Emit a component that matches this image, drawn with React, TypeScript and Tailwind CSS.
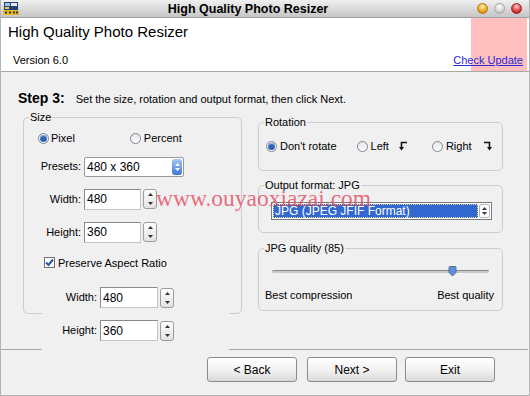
import React from 'react';

function Tri({ up, color = '#333' }: { up?: boolean; color?: string }) {
  return (
    <svg width="5" height="3" viewBox="0 0 5 3">
      <path d={up ? 'M0 3 L2.5 0 L5 3Z' : 'M0 0 L2.5 3 L5 0Z'} fill={color} />
    </svg>
  );
}

function Spin() {
  return (
    <div className="ml-[2px] flex h-[20px] w-[14px] flex-col items-center justify-between rounded-[3px] border border-[#9c9c9c] bg-linear-to-b from-white to-[#e2e2e2] py-[3px]">
      <Tri up />
      <Tri />
    </div>
  );
}

function Radio({ checked }: { checked?: boolean }) {
  return (
    <span className="flex h-[11px] w-[11px] shrink-0 items-center justify-center rounded-full border border-[#7d8794] bg-linear-to-b from-[#e4e4e4] to-white">
      {checked && <span className="h-[7px] w-[7px] rounded-full bg-[#2f62b4] shadow-[inset_0_1px_1px_#9cc0f0]" />}
    </span>
  );
}

function NumField({ label, value }: { label: string; value: string }) {
  return (
    <div className="flex items-center">
      <span className="w-[57px] text-right">{label}</span>
      <div className="ml-[3px] flex h-[21px] w-[57px] items-center border border-[#8a8a8a] border-b-[#c4c4c4] border-r-[#c4c4c4] bg-white pl-[2px] text-[12px]">
        {value}
      </div>
      <Spin />
    </div>
  );
}

function Group({ title, className, children }: { title: string; className: string; children: React.ReactNode }) {
  return (
    <fieldset className={`rounded-[5px] border border-[#cdcdcd] ${className}`}>
      <legend className="ml-[5px] px-[1px] leading-[13px]">{title}</legend>
      {children}
    </fieldset>
  );
}

function TurnArrow({ right }: { right?: boolean }) {
  return (
    <svg width="8" height="10" viewBox="0 0 8 10" className={right ? 'ml-[12px]' : 'ml-[10px]'}>
      {right ? (
        <>
          <path d="M0 1.5 H5.5 V6" stroke="#111" strokeWidth="1.6" fill="none" />
          <path d="M3 6 H8 L5.5 9.5Z" fill="#111" />
        </>
      ) : (
        <>
          <path d="M8 1.5 H2.5 V6" stroke="#111" strokeWidth="1.6" fill="none" />
          <path d="M0 6 H5 L2.5 9.5Z" fill="#111" />
        </>
      )}
    </svg>
  );
}

function AppIcon() {
  return (
    <svg width="16" height="15" viewBox="0 0 16 15">
      <rect x="1" y="1" width="14" height="8" fill="#24407a" />
      <rect x="2" y="2" width="5" height="3" fill="#9fc4ee" />
      <rect x="8" y="2" width="6" height="3" fill="#e8e8e8" />
      <rect x="2" y="6" width="4" height="2" fill="#f4d040" />
      <rect x="0" y="9" width="16" height="5" fill="#e8b828" />
      <rect x="2" y="10.5" width="2" height="2" fill="#333" />
      <rect x="6" y="10.5" width="2" height="2" fill="#333" />
      <rect x="10" y="10.5" width="2" height="2" fill="#333" />
      <rect x="13" y="10.5" width="2" height="2" fill="#333" />
    </svg>
  );
}

function WinButton({ label }: { label: string }) {
  return (
    <button className="h-[25px] w-[90px] rounded-[3px] border border-[#8c8c8c] bg-linear-to-b from-white via-[#f3f3f3] to-[#dadada] text-[12px] text-black">
      {label}
    </button>
  );
}

export default function App() {
  return (
    <div className="relative h-[396px] w-[530px] overflow-hidden border-x border-b border-[#b4b4b4] bg-[#f0f0f0] font-['Liberation_Sans',Arial,sans-serif] text-[11px] text-black">
      {/* title bar */}
      <div className="flex h-[18px] items-center border-b border-[#9e9e9e] bg-linear-to-b from-[#f0f0f0] to-[#c6c6c6]">
        <div className="pl-[2px]">
          <AppIcon />
        </div>
        <div className="flex-1 text-center text-[12.5px] font-bold leading-[18px]">High Quality Photo Resizer</div>
        <div className="flex items-center gap-[6px] pr-[7px]">
          <span className="h-[11px] w-[11px] rounded-full border border-[#b07818] bg-[radial-gradient(circle_at_50%_30%,#fff1b8,#f0a820_55%,#c07000)]" />
          <span className="h-[11px] w-[11px] rounded-full border border-[#a8a8a8] bg-[radial-gradient(circle_at_50%_30%,#ffffff,#d8d8d8_55%,#a8a8a8)]" />
          <span className="h-[11px] w-[11px] rounded-full border border-[#a02020] bg-[radial-gradient(circle_at_50%_30%,#ffd0d0,#e04040_55%,#a01010)]" />
        </div>
      </div>

      {/* header */}
      <div className="relative h-[54px] border-b border-[#a8a8a8] bg-white">
        <div className="absolute bottom-0 right-[2px] top-0 w-[56px] bg-[#ffbfbf]" />
        <div className="relative pl-[7px] pt-[5px] text-[15px] leading-[18px]">High Quality Photo Resizer</div>
        <div className="relative mt-[13px] flex items-center justify-between pl-[12px] pr-[6px] leading-[13px]">
          <span>Version 6.0</span>
          <span className="text-[#2a2ad0] underline">Check Update</span>
        </div>
      </div>

      {/* step line */}
      <div className="flex items-baseline pl-[17px] pt-[18px] leading-[16px]">
        <span className="text-[14px] font-bold">Step 3:</span>
        <span className="ml-[11px]">Set the size, rotation and output format, then click Next.</span>
      </div>

      <div className="mt-[4px] flex items-start pl-[22px]">
        {/* size group */}
        <Group title="Size" className="h-[203px] w-[219px]">
          <div className="mt-[6px] flex items-center pl-[14px]">
            <Radio checked />
            <span className="ml-[2px]">Pixel</span>
            <span className="ml-[55px]">
              <Radio />
            </span>
            <span className="ml-[3px]">Percent</span>
          </div>
          <div className="mt-[10px] flex items-center">
            <span className="w-[57px] text-right">Presets:</span>
            <div className="ml-[3px] flex h-[20px] w-[100px] items-center justify-between rounded-[2px] border border-[#9a9a9a] bg-white pl-[2px] pr-[1px] text-[12px]">
              480 x 360
              <div className="flex h-[16px] w-[10px] flex-col items-center justify-center gap-[2px] rounded-[3px] bg-linear-to-b from-[#a6c8f4] to-[#3a74d4]">
                <Tri up color="#fff" />
                <Tri color="#fff" />
              </div>
            </div>
          </div>
          <div className="mt-[12px]">
            <NumField label="Width:" value="480" />
          </div>
          <div className="mt-[12px]">
            <NumField label="Height:" value="360" />
          </div>
          <div className="mt-[12px] flex items-center pl-[20px]">
            <span className="flex h-[11px] w-[11px] items-center justify-center border border-[#707070] bg-white">
              <svg width="9" height="9" viewBox="0 0 9 9">
                <path d="M1 4.5 L3.5 7 L8 1.5" stroke="#2452a8" strokeWidth="2" fill="none" />
              </svg>
            </span>
            <span className="ml-[3px]">Preserve Aspect Ratio</span>
          </div>
        </Group>

        {/* right column */}
        <div className="ml-[16px] mt-[5px] flex w-[245px] flex-col">
          <Group title="Rotation" className="h-[55px]">
            <div className="mt-[9px] flex items-center pl-[7px]">
              <Radio checked />
              <span className="ml-[3px]">Don&apos;t rotate</span>
              <span className="ml-[20px]">
                <Radio />
              </span>
              <span className="ml-[3px]">Left</span>
              <TurnArrow />
              <span className="ml-[25px]">
                <Radio />
              </span>
              <span className="ml-[3px]">Right</span>
              <TurnArrow right />
            </div>
          </Group>
          <Group title="Output format: JPG" className="mt-[8px] h-[54px]">
            <div className="ml-[12px] mt-[10px] flex h-[18px] w-[221px] items-center border border-[#7a7a7a] bg-white p-[1px]">
              <div className="flex h-full flex-1 items-center border border-dotted border-[#e8d890] bg-[#3168d0] pl-[1px] text-[12px] text-white">
                JPG (JPEG JFIF Format)
              </div>
              <div className="ml-[1px] flex h-full w-[11px] flex-col items-center justify-center gap-[2px] rounded-[2px] border border-[#b0b8c8] bg-white">
                <Tri up color="#334" />
                <Tri color="#334" />
              </div>
            </div>
          </Group>
          <Group title="JPG quality (85)" className="mt-[9px] h-[69px]">
            <div className="relative mx-[13px] mt-[11px] h-[10px]">
              <div className="absolute left-0 right-0 top-[4px] h-[3px] rounded-full border-t border-[#8a8a8a] bg-[#c8c8c8]" />
              <svg width="9" height="11" viewBox="0 0 9 11" className="absolute left-[176px] top-0">
                <path d="M1 1.5 Q1 0.5 2 0.5 H7 Q8 0.5 8 1.5 V6.5 L4.5 10 L1 6.5Z" fill="#5a8ee0" stroke="#5f6f88" strokeWidth="1" />
              </svg>
            </div>
            <div className="mt-[11px] flex justify-between pl-[6px] pr-[8px]">
              <span>Best compression</span>
              <span>Best quality</span>
            </div>
          </Group>
        </div>
      </div>

      {/* separator */}
      <div className="mr-[1px] mt-[35px] h-px bg-[#a9a9a9]" />

      {/* buttons */}
      <div className="mt-[7px] flex pl-[206px]">
        <WinButton label="< Back" />
        <div className="ml-[10px]">
          <WinButton label="Next >" />
        </div>
        <div className="ml-[8px]">
          <WinButton label="Exit" />
        </div>
      </div>

      {/* overflowing sub panel */}
      <div className="absolute left-[41px] top-[282px] h-[73px] w-[187px] bg-[#f0f0f0]">
        <div className="mt-[5px] flex items-center">
          <span className="w-[55px] text-right">Width:</span>
          <div className="ml-[3px] flex h-[21px] w-[58px] items-center border border-[#8a8a8a] border-b-[#c4c4c4] border-r-[#c4c4c4] bg-white pl-[2px] text-[12px]">
            480
          </div>
          <Spin />
        </div>
        <div className="mt-[12px] flex items-center">
          <span className="w-[55px] text-right">Height:</span>
          <div className="ml-[3px] flex h-[21px] w-[58px] items-center border border-[#8a8a8a] border-b-[#c4c4c4] border-r-[#c4c4c4] bg-white pl-[2px] text-[12px]">
            360
          </div>
          <Spin />
        </div>
      </div>

      {/* watermark */}
      <div className="pointer-events-none absolute left-[155px] top-[186px] font-['Liberation_Serif',serif] text-[23.5px] leading-[24px] text-[#e24a60]/80">
        www.ouyaoxiazai.com
      </div>
    </div>
  );
}
